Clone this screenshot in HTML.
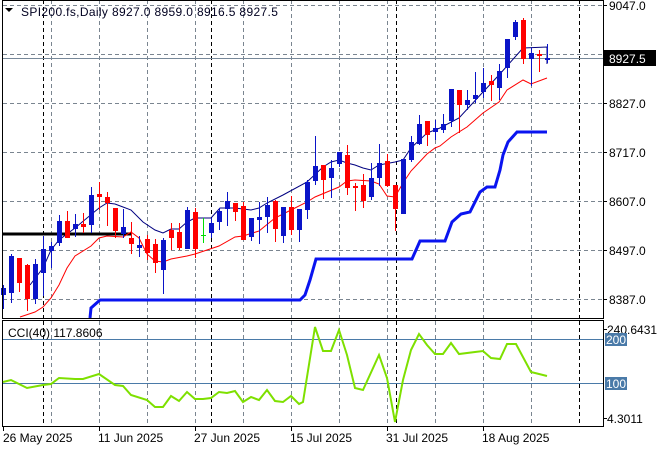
<!DOCTYPE html>
<html><head><meta charset="utf-8"><style>
html,body{margin:0;padding:0;background:#fff;width:660px;height:450px;overflow:hidden}
svg{display:block}
text{font-family:"Liberation Sans",sans-serif;font-size:12px;fill:#000}
</style></head><body>
<svg width="660" height="450" viewBox="0 0 660 450" xmlns="http://www.w3.org/2000/svg">
<rect width="660" height="450" fill="#fff"/>
<g stroke="#7a8590" stroke-width="1" stroke-dasharray="4,3" fill="none">
<path d="M3 5.5H603M3 54.5H603M3 103.5H603M3 152.5H603M3 201.5H603M3 250.5H603M3 299.5H603"/>
<path d="M51.5 0V318M99.5 0V318M147.5 0V318M195.5 0V318M243.5 0V318M291.5 0V318M339.5 0V318M387.5 0V318M435.5 0V318M483.5 0V318M531.5 0V318"/>
<path d="M51.5 321V426M99.5 321V426M147.5 321V426M195.5 321V426M243.5 321V426M291.5 321V426M339.5 321V426M387.5 321V426M435.5 321V426M483.5 321V426M531.5 321V426"/>
</g>
<g stroke="#000" stroke-width="1" stroke-dasharray="4,3" fill="none">
<path d="M43.5 0V318M211.5 0V318M396.5 0V318M579.5 0V318M43.5 321V426M211.5 321V426M396.5 321V426M579.5 321V426"/>
</g>
<path d="M3 58.5H603" stroke="#778899" stroke-width="1"/>
<path d="M3 234H132" stroke="#000" stroke-width="3"/>
<polyline fill="none" stroke="#0a14f0" stroke-width="3" points="90,318 91,308 100,300 300,300 305,295 310,280 316,259 412,259 420,241 445,241 452,222 461,214 470,212 480,192 487,187 495,187 500,170 503,155 508,142 517,132 547,132"/>
<polyline fill="none" stroke="#ff0000" stroke-width="1" points="20,317 35,312 43,307 51,298 59,285 67,268 75,256 91,246 99,238 107,236 123,237 131,232 139,238 147,254 155,261 163,262 171,259 187,256 195,254 219,246 235,237 243,236 259,231 275,218 291,210 307,202 315,197 339,187 347,181 355,180 371,181 379,184 387,196 395,197 403,183 411,171 427,154 435,148 440,146 451,137 467,127 483,113 499,102 507,90 523,80 531,84 547,78"/>
<polyline fill="none" stroke="#000080" stroke-width="1" points="30,285 43,268 51,250 59,240 75,228 99,208 107,203 115,204 123,207 131,210 143,222 155,230 163,233 171,229 179,229 187,222 195,218 211,218 220,208 235,208 251,210 259,208 267,203 283,195 307,182 323,167 331,162 339,160 347,163 355,165 363,168 371,170 379,165 395,162 403,160 411,148 427,133 440,128 459,118 483,92 499,75 523,48 547,47 547,64"/>
<g stroke="#0a14c8" fill="#0a14c8">
<path fill="none" d="M3.5 285V309M11.5 254V303M35.5 259V304M43.5 236V296M51.5 242V268M59.5 215V246M75.5 214V237M91.5 187V233M123.5 209V238M139.5 236V257M163.5 238V294M187.5 207V249M211.5 218V238M219.5 208V230M227.5 192V226M251.5 218V241M259.5 202V244M267.5 197V233M283.5 207V243M299.5 209V242M307.5 180V219M315.5 136V185M331.5 160V198M339.5 152V167M371.5 163V200M379.5 144V186M403.5 159V214M411.5 136V162M419.5 115V145M435.5 120V140M443.5 114V133M451.5 89V127M467.5 90V110M475.5 72V103M483.5 68V98M499.5 64V100M507.5 39V78M515.5 20V40M531.5 48V86M547.5 44V63"/>
<g stroke="none">
<rect x="1" y="288" width="5" height="7"/><rect x="9" y="256" width="5" height="37"/><rect x="33" y="264" width="5" height="35"/><rect x="41" y="249" width="5" height="24"/><rect x="49" y="246" width="5" height="5"/><rect x="57" y="221" width="5" height="22"/><rect x="73" y="224" width="5" height="5"/><rect x="89" y="195" width="5" height="30"/><rect x="121" y="227" width="5" height="7"/><rect x="137" y="245" width="5" height="3"/><rect x="161" y="240" width="5" height="30"/><rect x="185" y="210" width="5" height="39"/><rect x="209" y="223" width="5" height="10"/><rect x="217" y="211" width="5" height="11"/><rect x="225" y="201" width="5" height="8"/><rect x="249" y="218" width="5" height="19"/><rect x="257" y="217" width="5" height="3"/><rect x="265" y="205" width="5" height="12"/><rect x="281" y="207" width="5" height="29"/><rect x="297" y="209" width="5" height="21"/><rect x="305" y="182" width="5" height="28"/><rect x="313" y="166" width="5" height="15"/><rect x="329" y="168" width="5" height="10"/><rect x="337" y="152" width="5" height="12"/><rect x="369" y="178" width="5" height="19"/><rect x="377" y="163" width="5" height="15"/><rect x="401" y="159" width="5" height="55"/><rect x="409" y="142" width="5" height="18"/><rect x="417" y="124" width="5" height="20"/><rect x="433" y="128" width="5" height="4"/><rect x="441" y="124" width="5" height="6"/><rect x="449" y="89" width="5" height="32"/><rect x="465" y="100" width="5" height="5"/><rect x="473" y="95" width="5" height="4"/><rect x="481" y="83" width="5" height="9"/><rect x="497" y="71" width="5" height="17"/><rect x="505" y="39" width="5" height="29"/><rect x="513" y="22" width="5" height="15"/><rect x="529" y="53" width="5" height="6"/><rect x="545" y="58" width="5" height="2"/>
</g></g>
<g stroke="#ff0000" fill="#ff0000">
<path fill="none" d="M19.5 258V292M27.5 264V311M67.5 211V238M83.5 213V233M99.5 182V210M107.5 192V226M115.5 208V238M131.5 222V254M147.5 235V260M155.5 239V273M171.5 223V250M179.5 223V250M195.5 208V258M235.5 203V221M243.5 202V240M275.5 200V242M291.5 196V235M323.5 165V199M347.5 145V195M355.5 183V211M363.5 174V208M387.5 154V187M395.5 185V231M427.5 121V146M459.5 90V133M491.5 75V101M523.5 18V64M539.5 50V72"/>
<g stroke="none">
<rect x="17" y="258" width="5" height="25"/><rect x="25" y="265" width="5" height="34"/><rect x="65" y="221" width="5" height="17"/><rect x="81" y="224" width="5" height="3"/><rect x="97" y="194" width="5" height="3"/><rect x="105" y="197" width="5" height="6"/><rect x="113" y="208" width="5" height="23"/><rect x="129" y="238" width="5" height="6"/><rect x="145" y="239" width="5" height="14"/><rect x="153" y="244" width="5" height="19"/><rect x="169" y="230" width="5" height="8"/><rect x="177" y="232" width="5" height="16"/><rect x="193" y="212" width="5" height="37"/><rect x="233" y="203" width="5" height="9"/><rect x="241" y="206" width="5" height="34"/><rect x="273" y="201" width="5" height="28"/><rect x="289" y="207" width="5" height="23"/><rect x="321" y="165" width="5" height="15"/><rect x="345" y="155" width="5" height="33"/><rect x="353" y="186" width="5" height="2"/><rect x="361" y="185" width="5" height="16"/><rect x="385" y="161" width="5" height="25"/><rect x="393" y="185" width="5" height="24"/><rect x="425" y="121" width="5" height="14"/><rect x="457" y="90" width="5" height="15"/><rect x="489" y="81" width="5" height="4"/><rect x="521" y="20" width="5" height="39"/><rect x="537" y="54" width="5" height="2"/>
</g></g>
<path d="M203.5 218V243M201 235.5H206" stroke="#00dd00" fill="none"/>
<rect x="2.5" y="0.5" width="601" height="318" fill="none" stroke="#000"/>
<rect x="2.5" y="320.5" width="601" height="106" fill="none" stroke="#000"/>
<path d="M3 339.5H603M3 383.5H603" stroke="#4a7aa8" stroke-width="1"/>
<polyline fill="none" stroke="#7ee000" stroke-width="2" points="3,382 11,380 27,388 43,385 51,384 59,378 75,379 83,379 99,374 115,385 123,386 131,395 147,400 155,407 163,407 171,396 179,401 187,392 195,399 203,399 211,398 219,392 227,393 235,391 243,402 251,397 259,400 267,390 275,401 283,402 291,396 299,404 303,402 315,327 323,351 331,351 339,330 347,355 355,388 363,390 379,355 387,378 395,422 403,380 411,350 419,334 427,345 435,354 443,354 451,343 459,354 475,352 483,351 491,358 500,359 507,344 516,344 531,372 547,376"/>
<path d="M5 8H13L9 12Z" fill="#000"/>
<text x="21" y="16" style="fill:#000020;letter-spacing:0.35px">SPI200.fs,Daily  8927.0 8959.0 8916.5 8927.5</text>
<text x="8" y="337">CCI(40) 117.8606</text>
<g stroke="#000"><path d="M603 5.5H607M603 103.5H607M603 152.5H607M603 201.5H607M603 250.5H607M603 299.5H607M603 329.5H607M603 418.5H607"/></g>
<text x="609" y="10">9047.0</text>
<rect x="604" y="50" width="52" height="16" fill="#000"/>
<text x="609" y="63" style="fill:#fff">8927.5</text>
<text x="609" y="108">8827.0</text>
<text x="609" y="157">8717.0</text>
<text x="609" y="206">8607.0</text>
<text x="609" y="255">8497.0</text>
<text x="609" y="304">8387.0</text>
<text x="607" y="334">240.6431</text>
<rect x="605" y="333" width="22" height="13" fill="#4a7aa8"/>
<text x="606" y="344" style="fill:#fff">200</text>
<rect x="605" y="377" width="22" height="13" fill="#4a7aa8"/>
<text x="606" y="388" style="fill:#fff">100</text>
<text x="607" y="423">4.3011</text>
<g stroke="#000"><path d="M3.5 427V431M99.5 427V431M195.5 427V431M291.5 427V431M387.5 427V431M483.5 427V431"/></g>
<text x="3" y="442">26 May 2025</text>
<text x="98" y="442">11 Jun 2025</text>
<text x="194" y="442">27 Jun 2025</text>
<text x="290" y="442">15 Jul 2025</text>
<text x="386" y="442">31 Jul 2025</text>
<text x="482" y="442">18 Aug 2025</text>
</svg>
</body></html>
